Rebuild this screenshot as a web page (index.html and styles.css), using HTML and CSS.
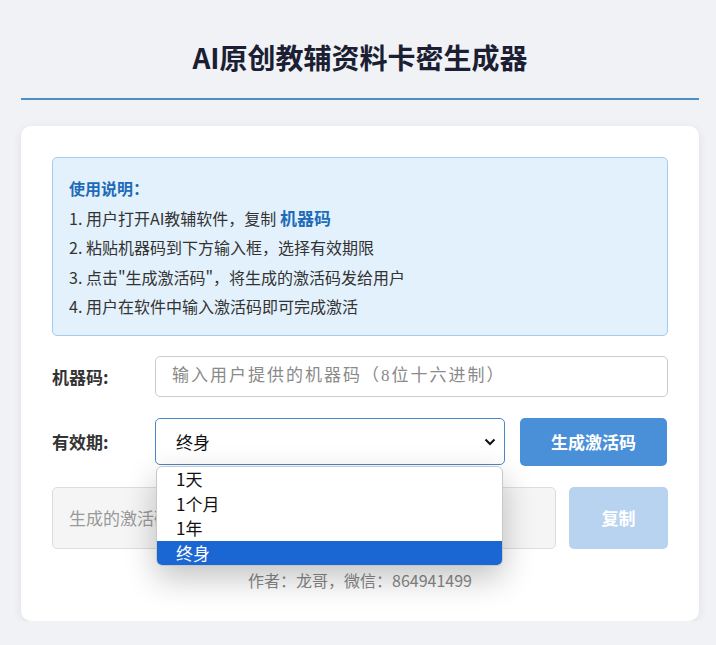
FILE: index.html
```html
<!DOCTYPE html>
<html lang="zh-CN">
<head>
    <meta charset="UTF-8">
    <meta name="viewport" content="width=device-width, initial-scale=1.0">
    <title>AI原创教辅资料卡密生成器</title>
    <link rel="stylesheet" href="styles.css">
</head>
<body>
    <div class="page">
        <header class="header">
            <h1>AI原创教辅资料卡密生成器</h1>
        </header>

        <div class="card">
            <div class="guide">
                <div class="guide-title">使用说明：</div>
                <div class="guide-line">1. 用户打开AI教辅软件，复制 <b>机器码</b></div>
                <div class="guide-line">2. 粘贴机器码到下方输入框，选择有效期限</div>
                <div class="guide-line">3. 点击"生成激活码"，将生成的激活码发给用户</div>
                <div class="guide-line">4. 用户在软件中输入激活码即可完成激活</div>
            </div>

            <div class="row">
                <label class="label" for="code">机器码:</label>
                <input class="field" id="code" type="text" placeholder="输入用户提供的机器码（8位十六进制）">
            </div>

            <div class="row">
                <label class="label" for="period">有效期:</label>
                <div class="select-wrap">
                    <div class="select" id="period">
                        <span>终身</span>
                        <svg class="chevron" width="12" height="8" viewBox="0 0 12 8">
                            <path d="M1.5 1.5 L6 6 L10.5 1.5" fill="none" stroke="#111" stroke-width="2"/>
                        </svg>
                    </div>
                    <!-- lista aberta do select -->
                    <ul class="options">
                        <li>1天</li>
                        <li>1个月</li>
                        <li>1年</li>
                        <li class="selected">终身</li>
                    </ul>
                </div>
                <button class="btn btn-primary">生成激活码</button>
            </div>

            <div class="row">
                <input class="field output" type="text" placeholder="生成的激活码将显示在这里" readonly>
                <button class="btn btn-copy" disabled>复制</button>
            </div>

            <p class="footer">作者：龙哥，微信：864941499</p>
        </div>
    </div>
</body>
</html>
```

FILE: styles.css
```css
* {
    margin: 0;
    padding: 0;
    box-sizing: border-box;
}

body {
    font-family: "Noto Sans CJK SC", "Noto Sans", sans-serif;
    background: #f0f2f5;
    color: #333;
}

.page {
    padding: 0 17px 0 21px;
}

.header {
    padding: 37px 0 21px;
    border-bottom: 2px solid #4f8fc6;
    text-align: center;
    margin-bottom: 26px;
}

h1 {
    font-size: 28px;
    line-height: 40px;
    font-weight: 700;
    color: #1c1f33;
}

.card {
    background: #fff;
    border-radius: 10px;
    box-shadow: 0 2px 10px rgba(0, 0, 0, 0.08);
    padding: 31px 31px 30px;
}

.guide {
    background: #e3f1fc;
    border: 1px solid #a3cdea;
    border-radius: 5px;
    padding: 16px 16px 13px;
    margin-bottom: 20px;
}

.guide-title {
    color: #1e6bb8;
    font-weight: 700;
    font-size: 16px;
    line-height: 29.5px;
}

.guide-line {
    font-size: 16px;
    line-height: 29.5px;
    height: 29.5px;
    color: #333;
}

.guide-line b {
    color: #1e6bb8;
    font-size: 17px;
    line-height: 1;
}

.row {
    display: flex;
    align-items: center;
    margin-bottom: 21px;
}

.label {
    width: 103px;
    flex-shrink: 0;
    font-size: 17px;
    font-weight: 700;
    color: #333;
}

.field {
    flex: 1;
    height: 41px;
    border: 1px solid #ccc;
    border-radius: 5px;
    padding: 0 16px;
    font-family: "Liberation Serif", "Noto Sans CJK SC", serif;
    font-size: 17px;
    letter-spacing: 2px;
    color: #333;
    outline: none;
}

.field::placeholder {
    color: #8a8a8a;
}

.select-wrap {
    position: relative;
    width: 350px;
    margin-right: 15px;
}

.select {
    height: 47px;
    border: 1px solid #4a87c8;
    border-radius: 5px;
    display: flex;
    align-items: center;
    justify-content: space-between;
    padding: 0 8px 0 20px;
    font-size: 17px;
    color: #111;
}

.options {
    position: absolute;
    left: 1px;
    right: 2px;
    top: 48px;
    list-style: none;
    background: #fff;
    border: 1px solid #c8c8c8;
    border-radius: 6px;
    overflow: hidden;
    box-shadow: 0 12px 32px rgba(0, 0, 0, 0.24);
    z-index: 10;
}

.options li {
    height: 24.5px;
    line-height: 24.5px;
    padding-left: 19px;
    font-size: 17px;
    color: #111;
}

.options li.selected {
    background: #1a67d3;
    color: #fff;
}

.btn {
    border: none;
    border-radius: 5px;
    color: #fff;
    font-family: inherit;
    font-size: 17px;
    font-weight: 700;
}

.btn-primary {
    width: 147px;
    height: 48px;
    background: #4a90d9;
}

.output {
    height: 62px;
    background: #f5f5f5;
    border-color: #ddd;
    font-family: "Noto Sans CJK SC", sans-serif;
    letter-spacing: 0;
    margin-right: 13px;
}

.output::placeholder {
    color: #999;
}

.btn-copy {
    width: 99px;
    height: 62px;
    background: #b7d3f0;
}

.footer {
    text-align: center;
    font-size: 16px;
    color: #888;
    margin-top: -1px;
    line-height: 22px;
}
```
